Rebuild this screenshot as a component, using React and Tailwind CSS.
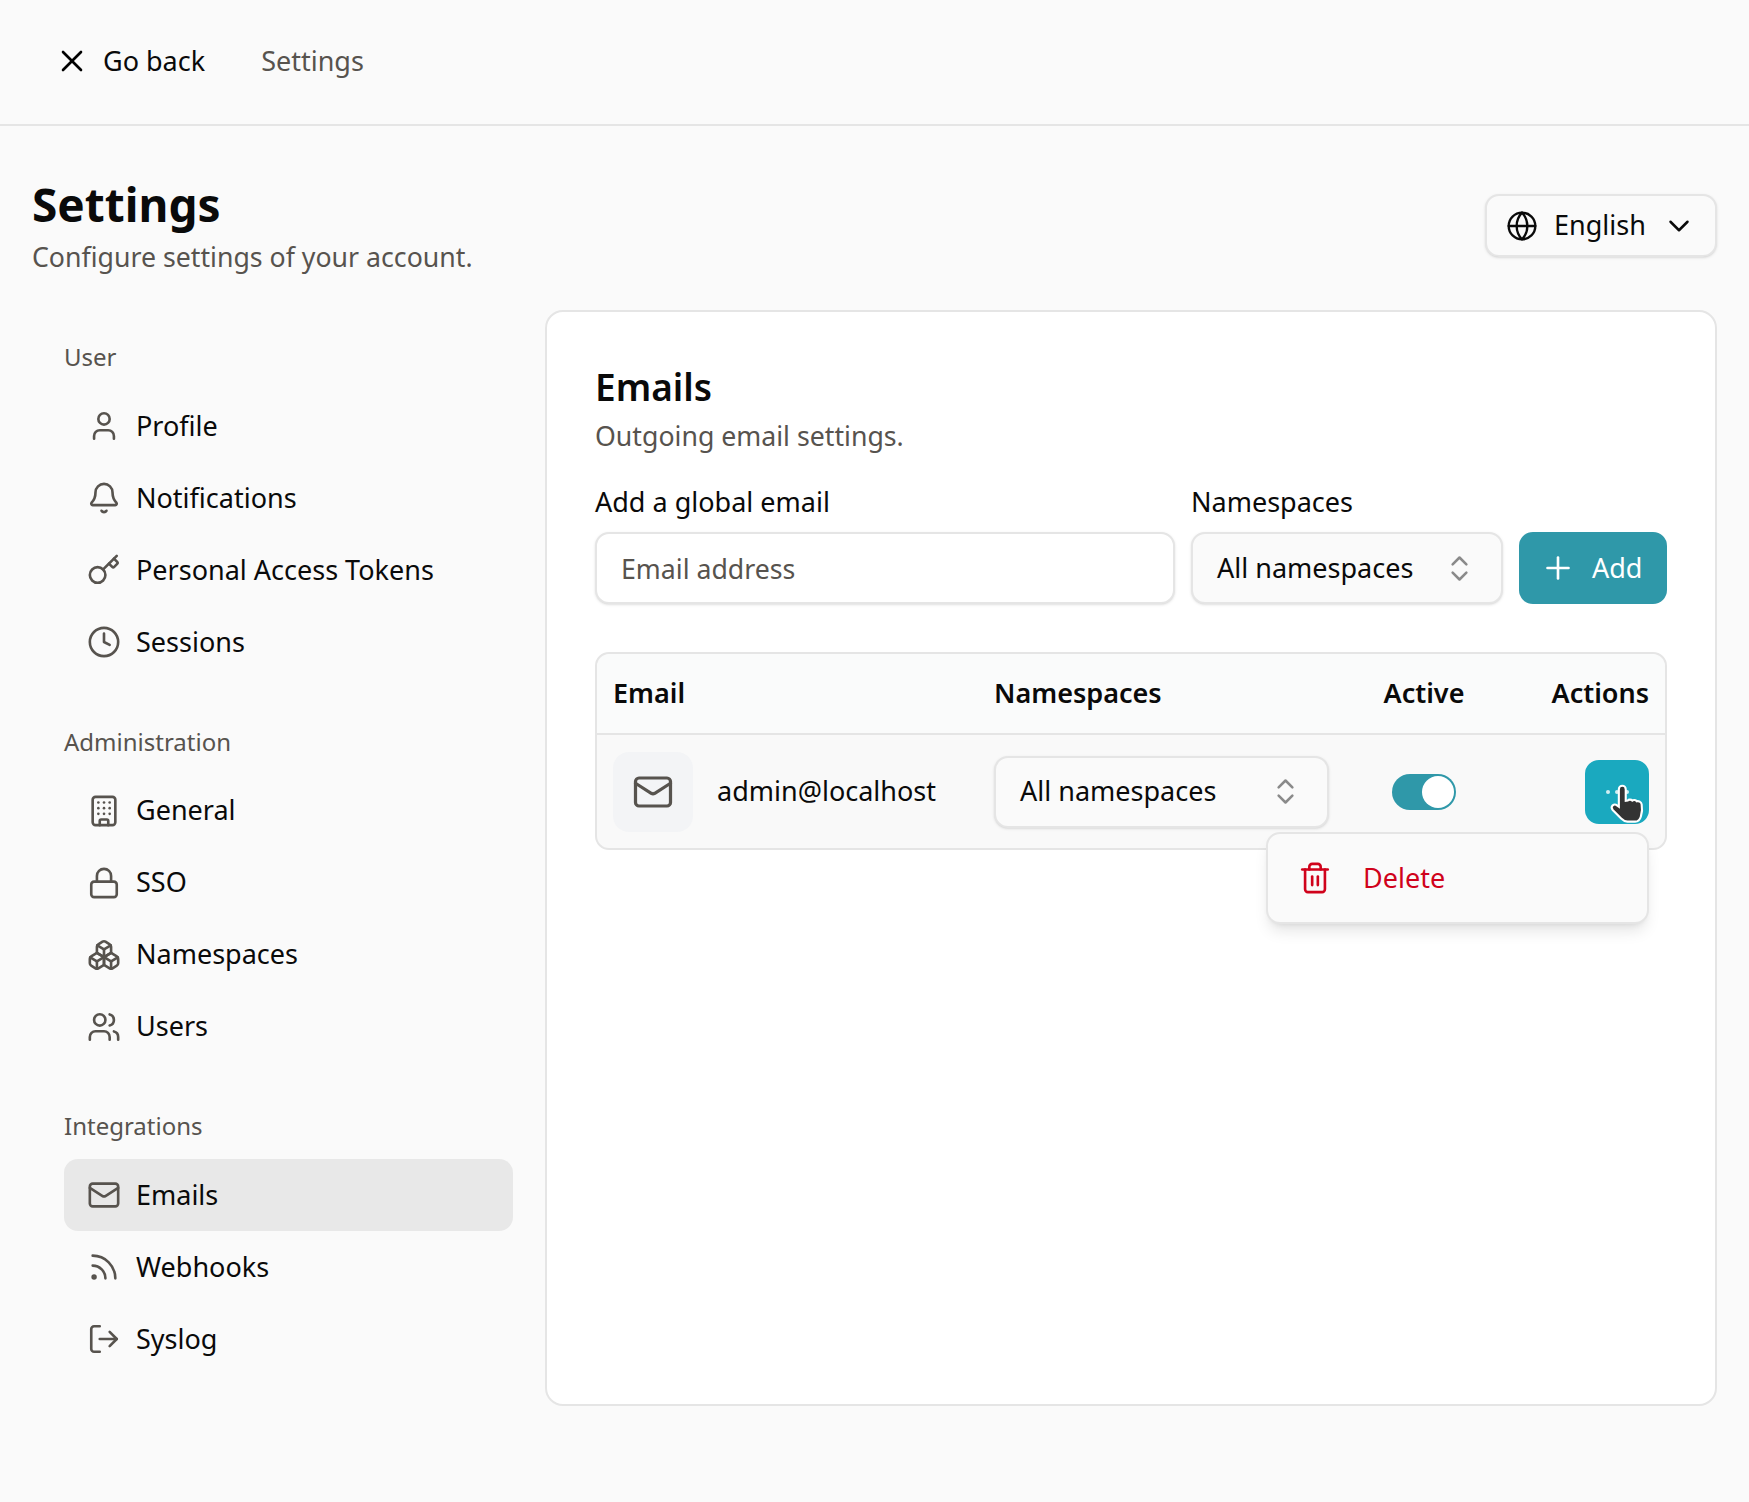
import React from 'react';
import { User, Bell, Key, Clock, Building, Lock, Boxes, Users, Mail, Rss, LogOut, X, Globe, ChevronDown, ChevronsUpDown, Plus, Trash2 } from 'lucide-react';

const groups = [
  {
    label: 'User',
    items: [
      { name: 'Profile', icon: User },
      { name: 'Notifications', icon: Bell },
      { name: 'Personal Access Tokens', icon: Key },
      { name: 'Sessions', icon: Clock },
    ],
  },
  {
    label: 'Administration',
    items: [
      { name: 'General', icon: Building },
      { name: 'SSO', icon: Lock },
      { name: 'Namespaces', icon: Boxes },
      { name: 'Users', icon: Users },
    ],
  },
  {
    label: 'Integrations',
    items: [
      { name: 'Emails', icon: Mail, active: true },
      { name: 'Webhooks', icon: Rss },
      { name: 'Syslog', icon: LogOut },
    ],
  },
];

function SideItem({ item }) {
  const Icon = item.icon;
  return (
    <a className={`flex h-[72px] items-center gap-[15px] rounded-[14px] pl-[23px] text-[27px] text-[#0a0a0a] ${item.active ? 'bg-[#e8e8e8]' : ''}`}>
      <Icon className="size-[34px] shrink-0 text-[#57534e]" strokeWidth={1.85} />
      {item.name}
    </a>
  );
}

function NamespaceSelect({ className }) {
  return (
    <button className={`flex items-center justify-between rounded-[14px] border-2 border-[#e5e5e5] bg-[#fafafa] pl-[24px] pr-[25px] text-[27px] text-[#0a0a0a] shadow-sm ${className}`}>
      All namespaces
      <ChevronsUpDown className="size-[33px] text-[#8a8a8a]" strokeWidth={1.85} />
    </button>
  );
}

function HandCursor() {
  return (
    <svg className="absolute left-[21px] top-[21px] size-[46px]" viewBox="0 0 24 24">
      <path
        d="M8.500 2.500c1 0 1.800.8 1.800 1.800v6l1-.1c.5-.6 1.800-.7 2.400 0 .7-.5 1.900-.3 2.300.4 1-.3 2.400.3 2.600 1.600.4 2.300.2 4.500-.4 6.300-.5 1.700-1.500 2.700-3 2.700h-4c-1.500 0-2.400-.7-3.300-1.600l-4.400-4.500c-.7-.8-.6-1.800 0-2.400.7-.6 1.600-.5 2.400.1l.8.600V4.300c0-1 .8-1.800 1.800-1.800z"
        fill="#333"
        stroke="#fff"
        strokeWidth="1.100"
      />
    </svg>
  );
}

export default function App() {
  return (
    <div className="min-h-[1502px] bg-[#fafafa] font-['Noto_Sans',sans-serif] text-[#0a0a0a]">
      <header className="flex h-[126px] items-center border-b-2 border-[#e5e5e5] pb-[2px] pl-[54px]">
        <a className="flex items-center gap-[13px] text-[27px]">
          <X className="size-[36px] text-black" strokeWidth={1.75} />
          Go back
        </a>
        <span className="ml-[56px] text-[27px] text-[#57534e]">Settings</span>
      </header>

      <div className="px-[32px] pt-[50px]">
        <div className="flex items-start justify-between">
          <div>
            <h1 className="text-[46px] leading-[56px] font-bold">Settings</h1>
            <p className="mt-[7px] text-[26.7px] leading-[36px] text-[#57534e]">Configure settings of your account.</p>
          </div>
          <button className="mt-[18px] flex h-[63px] w-[232px] items-center gap-[16px] rounded-[14px] border-2 border-[#e5e5e5] bg-[#fafafa] pl-[19px] text-[27px] shadow-sm">
            <Globe className="size-[32px]" strokeWidth={1.75} />
            English
            <ChevronDown className="size-[34px]" strokeWidth={1.75} />
          </button>
        </div>

        <div className="mt-[35px] flex gap-[32px]">
          <nav className="ml-[32px] w-[449px] shrink-0 pt-[30px]">
            {groups.map((group) => (
              <div key={group.label} className="mb-[46.5px] flex flex-col">
                <div className="mb-[16px] text-[24px] leading-[34px] text-[#57534e]">{group.label}</div>
                {group.items.map((item) => (
                  <SideItem key={item.name} item={item} />
                ))}
              </div>
            ))}
          </nav>

          <main className="h-[1096px] flex-1 rounded-[18px] border-2 border-[#e5e5e5] bg-white px-[48px] pt-[50px]">
            <h2 className="text-[37px] leading-[50px] font-semibold">Emails</h2>
            <p className="mt-[6px] text-[26.7px] leading-[36px] text-[#57534e]">Outgoing email settings.</p>

            <div className="mt-[30px] flex items-end gap-[16px]">
              <label className="flex flex-1 flex-col gap-[12px]">
                <span className="text-[27px] leading-[36px]">Add a global email</span>
                <input
                  placeholder="Email address"
                  className="h-[72px] rounded-[14px] border-2 border-[#e5e5e5] bg-white px-[24px] text-[26.7px] shadow-sm outline-none placeholder:text-[#57534e]"
                />
              </label>
              <div className="flex w-[312px] flex-col gap-[12px]">
                <span className="text-[27px] leading-[36px]">Namespaces</span>
                <NamespaceSelect className="h-[72px] w-full" />
              </div>
              <button className="flex h-[72px] w-[148px] items-center gap-[16px] rounded-[14px] bg-[#2f98a9] pl-[21px] text-[27px] text-white">
                <Plus className="size-[36px]" strokeWidth={1.75} />
                Add
              </button>
            </div>

            <div className="relative mt-[48px] rounded-[14px] border-2 border-[#e5e5e5] bg-[#f9f9f9]">
              <div className="flex h-[81px] items-center rounded-t-[14px] border-b-2 border-[#e5e5e5] bg-[#fafbfb] px-[16px] text-[27px] font-semibold">
                <span className="w-[381px]">Email</span>
                <span className="w-[355px]">Namespaces</span>
                <span className="w-[150px] text-center">Active</span>
                <span className="flex-1 text-right">Actions</span>
              </div>
              <div className="flex h-[113px] items-center px-[16px] text-[27px]">
                <div className="flex w-[381px] items-center gap-[24px]">
                  <span className="flex size-[80px] items-center justify-center rounded-[16px] bg-[#f3f4f6]">
                    <Mail className="size-[42px] text-[#57534e]" strokeWidth={1.85} />
                  </span>
                  admin@localhost
                </div>
                <div className="w-[355px]">
                  <NamespaceSelect className="h-[72px] w-[335px]" />
                </div>
                <div className="flex w-[150px] justify-center">
                  <span className="flex h-[36px] w-[64px] items-center justify-end rounded-full bg-[#2f98a9] pr-[2px]">
                    <span className="size-[32px] rounded-full bg-white" />
                  </span>
                </div>
                <div className="flex flex-1 justify-end">
                  <button className="relative flex size-[64px] items-center justify-center gap-[5.5px] rounded-[14px] bg-[#1aa9bf]">
                    <span className="size-[4px] rounded-full bg-white/80" />
                    <span className="size-[4px] rounded-full bg-white/80" />
                    <span className="size-[4px] rounded-full bg-white/80" />
                    <HandCursor />
                  </button>
                </div>
              </div>
              <div className="absolute right-[16px] top-[178px] flex h-[92px] w-[383px] items-center gap-[31px] rounded-[14px] border-2 border-[#e5e5e5] bg-[#fafafa] pl-[30px] text-[27px] text-[#d0021b] shadow-lg">
                <Trash2 className="size-[34px]" strokeWidth={1.85} />
                Delete
              </div>
            </div>
          </main>
        </div>
      </div>
    </div>
  );
}
